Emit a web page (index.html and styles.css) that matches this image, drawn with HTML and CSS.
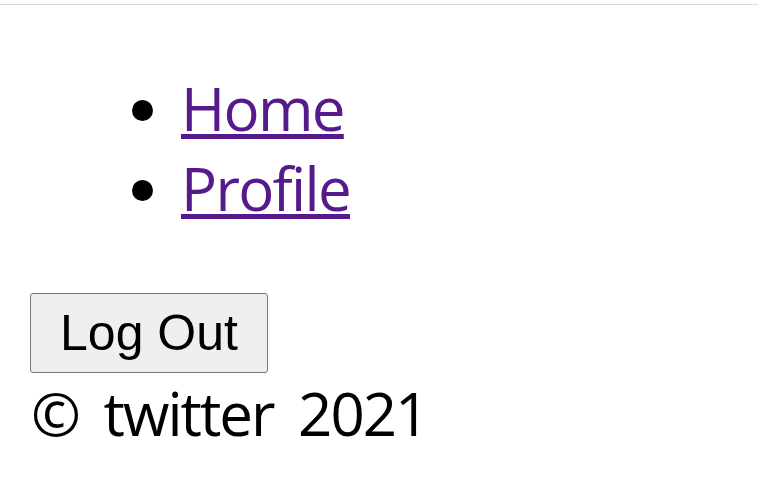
FILE: index.html
```html
<!DOCTYPE html>
<html lang="en">
<head>
<meta charset="utf-8">
<title>twitter</title>
<link rel="stylesheet" href="styles.css">
</head>
<body>
<div class="topbar"></div>
<nav>
  <ul class="nav">
    <li><a href="#" class="nav-link">Home</a></li>
    <li><a href="#" class="nav-link">Profile</a></li>
  </ul>
</nav>
<div class="actions">
  <button class="logout" type="button">Log Out</button>
</div>
<footer class="footer">© twitter 2021</footer>
</body>
</html>
```
FILE: styles.css
```css
html, body {
  background: #ffffff;
}
body {
  margin: 0;
  font-family: "Open Sans", "Noto Sans", sans-serif;
  font-size: 60px;
  line-height: 80px;
  color: #000000;
}
.topbar {
  height: 4px;
  border-bottom: 1px solid #dadada;
}
.nav {
  margin: 63px 0 0 0;
  padding-left: 181px;
  list-style: disc;
}
.nav-link {
  color: #551a8b;
  letter-spacing: -1.7px;
  text-decoration: underline;
  text-decoration-thickness: 5px;
  text-underline-offset: 3px;
}
.actions {
  display: flex;
  margin-top: 65px;
  padding-left: 30px;
}
.logout {
  box-sizing: border-box;
  width: 238px;
  height: 80px;
  padding: 0;
  border: 1px solid #767676;
  border-radius: 3px;
  background: #efefef;
  color: #000000;
  font-family: "Liberation Sans", Arial, sans-serif;
  font-size: 50px;
}
.footer {
  padding-left: 31px;
  letter-spacing: -2px;
  word-spacing: 11px;
}
```
